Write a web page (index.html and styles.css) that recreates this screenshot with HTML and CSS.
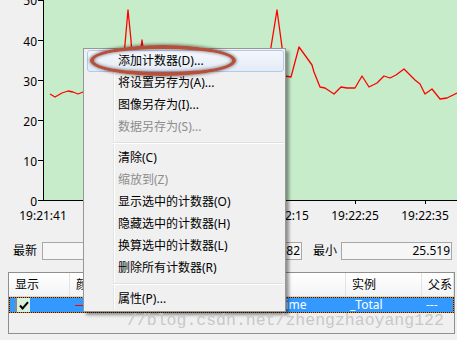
FILE: index.html
```html
<!DOCTYPE html>
<html lang="zh-CN">
<head>
    <meta charset="UTF-8">
    <title>性能监视器</title>
    <link rel="stylesheet" href="styles.css">
</head>
<body>
    <svg class="chart" width="457" height="242" viewBox="0 0 457 242">
        <rect class="plot" x="44" y="0" width="413" height="200"></rect>
        <polyline class="series" points="50,94 55,97 62,93 68,91 73,92 78,94 83,92 90,90 98,93 105,91 112,92 118,90 122,80 125,44 128,10 131,40 134,88 138,70 142,40 145,62 150,92 160,90 170,88 180,92 190,86 200,90 210,92 220,88 230,90 240,91 250,88 260,90 267,80 271,47 277,10 282,47 285,76 291,77 299,47 307,58 312,65 314,72 320,87 325,88 334,94 341,87 347,88 355,88 362,76 369,87 377,83 384,76 390,78 396,75 404,69 409,74 415,80 420,84 425,94 432,89 440,99 447,98 457,93"></polyline>
        <g class="axis">
            <line x1="43.5" y1="0" x2="43.5" y2="201"></line>
            <line x1="38" y1="200.5" x2="457" y2="200.5"></line>
            <line x1="38" y1="0.5" x2="43" y2="0.5"></line>
            <line x1="38" y1="40.5" x2="43" y2="40.5"></line>
            <line x1="38" y1="80.5" x2="43" y2="80.5"></line>
            <line x1="38" y1="120.5" x2="43" y2="120.5"></line>
            <line x1="38" y1="160.5" x2="43" y2="160.5"></line>
            <line x1="145.5" y1="200" x2="145.5" y2="204"></line>
            <line x1="215.5" y1="200" x2="215.5" y2="204"></line>
            <line x1="285.5" y1="200" x2="285.5" y2="204"></line>
            <line x1="355.5" y1="200" x2="355.5" y2="204"></line>
            <line x1="425.5" y1="200" x2="425.5" y2="204"></line>
        </g>
        <g class="ylabels">
            <text x="37" y="5">50</text>
            <text x="37" y="46">40</text>
            <text x="37" y="86">30</text>
            <text x="37" y="126">20</text>
            <text x="37" y="166">10</text>
            <text x="37" y="206">0</text>
        </g>
        <g class="xlabels">
            <text x="43" y="220">19:21:41</text>
            <text x="285" y="220">19:22:15</text>
            <text x="355" y="220">19:22:25</text>
            <text x="425" y="220">19:22:35</text>
        </g>
    </svg>

    <div class="stats">
        <span class="label first">最新</span>
        <div class="value latest"></div>
        <span class="label"></span>
        <div class="value avg"></div>
        <span class="label"></span>
        <div class="value max">47.682</div>
        <span class="label gap">最小</span>
        <div class="value min">25.519</div>
    </div>

    <div class="counters">
        <div class="head">
            <div>显示</div>
            <div>颜色</div>
            <div></div>
            <div></div>
            <div>实例</div>
            <div>父系</div>
        </div>
        <div class="row">
            <div><span class="check"><svg width="10" height="9" viewBox="0 0 10 9"><path d="M1 4.5 L3.6 7.5 L9 1.2" fill="none" stroke="#000" stroke-width="2"/></svg></span></div>
            <div><span class="swatch"></span></div>
            <div></div>
            <div class="counter">% Processor Time</div>
            <div>_Total</div>
            <div>---</div>
        </div>
    </div>

    <div class="menu">
        <div class="item hover">添加计数器(D)...</div>
        <div class="item">将设置另存为(A)...</div>
        <div class="item">图像另存为(I)...</div>
        <div class="item disabled">数据另存为(S)...</div>
        <div class="sep"></div>
        <div class="item">清除(C)</div>
        <div class="item disabled">缩放到(Z)</div>
        <div class="item">显示选中的计数器(O)</div>
        <div class="item">隐藏选中的计数器(H)</div>
        <div class="item">换算选中的计数器(L)</div>
        <div class="item">删除所有计数器(R)</div>
        <div class="sep"></div>
        <div class="item">属性(P)...</div>
    </div>

    <div class="callout"></div>
    <div class="watermark">//blog.csdn.net/zhengzhaoyang122</div>
</body>
</html>
```

FILE: styles.css
```css
*{
    margin: 0;
    padding: 0;
    box-sizing: border-box;
}
body{
    position: relative;
    width: 457px;
    height: 340px;
    overflow: hidden;
    background: #f0f0f0;
    font-family: "Noto Sans", "Noto Sans CJK SC", sans-serif;
    font-size: 12px;
    color: #000;
}

/* chart */
.chart{
    display: block;
}
.chart .plot{
    fill: #c7ecca;
}
.chart .series{
    fill: none;
    stroke: #ff0000;
    stroke-width: 1.3;
    stroke-linejoin: round;
}
.chart .axis line{
    stroke: #000;
    stroke-width: 1;
}
.chart text{
    font-family: "Noto Sans", sans-serif;
    font-size: 12px;
    fill: #000;
}
.chart .ylabels text{
    text-anchor: end;
}
.chart .xlabels text{
    text-anchor: middle;
}

/* stats row */
.stats{
    display: flex;
    align-items: center;
    height: 18px;
    padding-left: 13px;
}
.stats .label{
    width: 24px;
    margin-left: 6px;
    margin-right: 4px;
    line-height: 18px;
}
.stats .label.first{
    margin-left: 0;
    margin-right: 5px;
}
.stats .label.gap{
    margin-left: 11px;
}
.stats .value{
    height: 18px;
    border: 1px solid #a7a7a7;
    background: #f6f6f6;
    text-align: right;
    padding-right: 1px;
    line-height: 16px;
}
.stats .value.latest{ width: 82px; }
.stats .value.avg{ width: 52px; }
.stats .value.max{ width: 58px; }
.stats .value.min{ width: 111px; }

/* counter list */
.counters{
    margin: 12px 2px 0 8px;
    height: 62px;
    border: 1px solid #8f8f8f;
}
.counters .head,
.counters .row{
    display: grid;
    grid-template-columns: 61px 80px 53px 143px 76px 1fr;
}
.counters .head{
    height: 24px;
    background: linear-gradient(#ffffff, #f3f4f6);
    border-bottom: 1px solid #d5d5d5;
}
.counters .head div{
    padding-left: 6px;
    line-height: 23px;
    border-right: 1px solid #e3e3e3;
}
.counters .row{
    height: 16px;
    grid-template-columns: 60px 80px 53px 143px 76px 1fr;
    border: 1px dotted #1c1c1c;
    background: linear-gradient(#3399ff, #3399ff) padding-box, linear-gradient(#d9892c, #d9892c) border-box;
    color: #fff;
}
.counters .row div{
    padding-left: 4px;
    line-height: 14px;
    white-space: nowrap;
    overflow: hidden;
}
.counters .row .counter{
    text-align: right;
    padding-right: 42px;
}
.counters .row .check{
    display: flex;
    justify-content: center;
    align-items: center;
    width: 15px;
    height: 14px;
    margin-left: 1px;
    background: #daf0da;
    border-left: 2px solid #8a8a8a;
}
.counters .row .swatch{
    display: block;
    width: 72px;
    height: 1px;
    margin-top: 7px;
    margin-left: 1px;
    background: #ff0000;
}

/* context menu */
.menu{
    position: absolute;
    left: 83px;
    top: 48px;
    width: 203px;
    padding: 1px 1px 1px 3px;
    border: 1px solid #979797;
    background: #f0f0f0;
    box-shadow: 3px 3px 3px rgba(0,0,0,.4);
}
.menu::before{
    content: "";
    position: absolute;
    left: 29px;
    top: 1px;
    bottom: 1px;
    width: 1px;
    background: #e2e3e3;
    box-shadow: 1px 0 #fff;
}
.menu .item{
    position: relative;
    height: 22px;
    line-height: 20px;
    padding-left: 30px;
    border: 1px solid transparent;
    border-radius: 3px;
    white-space: nowrap;
}
.menu .item.hover{
    border-color: #aecbf0;
    background: linear-gradient(#f4f7fc, #e4ebf6);
}
.menu .item.disabled{
    color: #8d8d8d;
}
.menu .sep{
    position: relative;
    height: 2px;
    margin: 4px 0 3px 26px;
    border-top: 1px solid #e0e0e0;
    border-bottom: 1px solid #fff;
}

/* annotation */
.callout{
    position: absolute;
    left: 90px;
    top: 45px;
    width: 146px;
    height: 31px;
    border: 4px solid #b4503b;
    border-radius: 50%;
    box-shadow: 0 0 3px 1px rgba(0,0,0,.4), inset 0 0 3px 1px rgba(0,0,0,.35);
}
.watermark{
    position: absolute;
    left: 127px;
    top: 313px;
    font-family: "Liberation Mono", monospace;
    font-size: 16.5px;
    line-height: 1;
    color: #c8c8c8;
    white-space: nowrap;
}
```
